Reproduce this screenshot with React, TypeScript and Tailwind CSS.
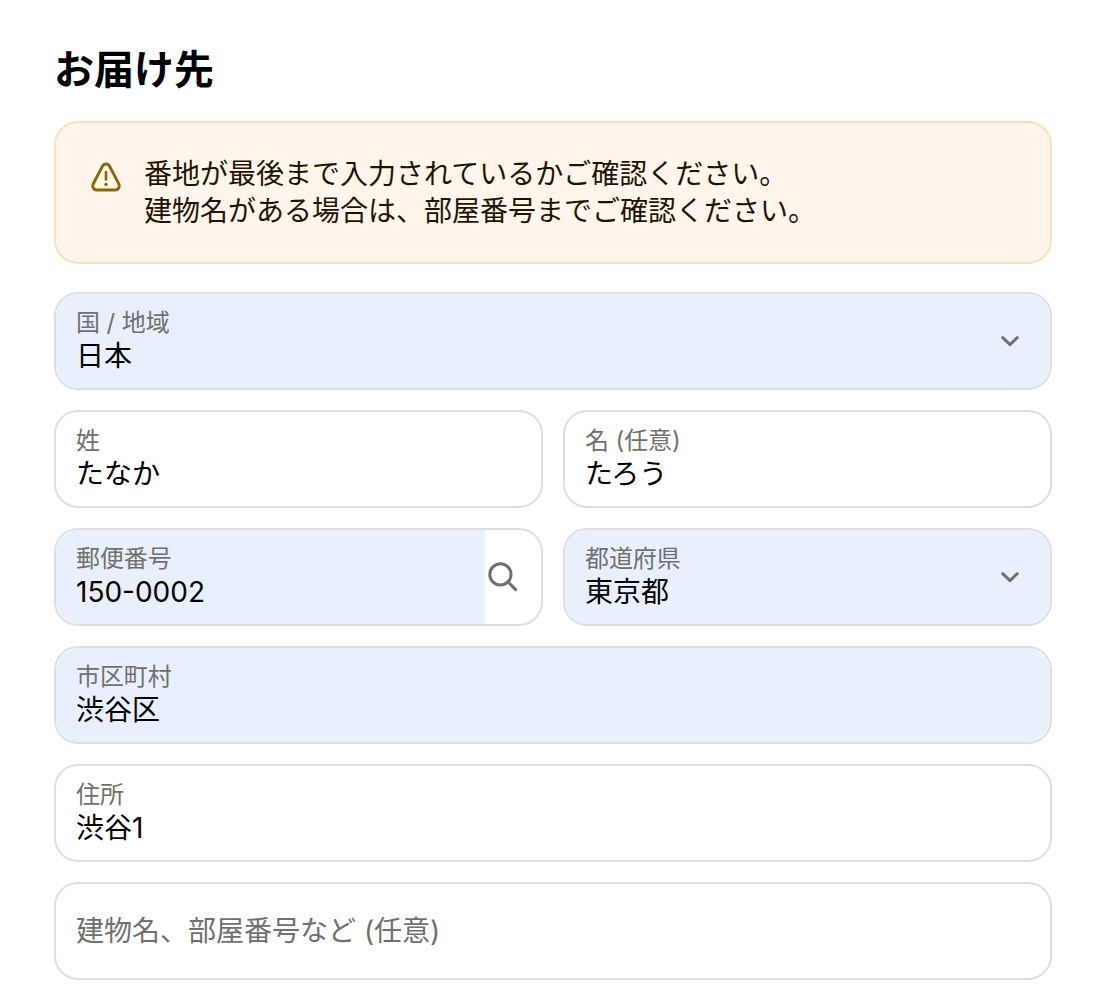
import type { ReactNode } from "react";

const Chevron = () => (
  <svg width="20" height="12" viewBox="0 0 20 12" fill="none" className="mr-[30px] shrink-0">
    <path d="M2.7 2.7L10 9.6L17.3 2.7" stroke="#707070" strokeWidth="3" strokeLinecap="round" strokeLinejoin="round" />
  </svg>
);

type FieldProps = {
  label: string;
  value: string;
  fill?: string;
  icon?: ReactNode;
};

const Field = ({ label, value, fill = "", icon }: FieldProps) => (
  <div className="h-[98px] rounded-[24px] border-2 border-[#dedede] bg-white">
    <div className={`flex h-full items-center overflow-hidden ${fill}`}>
      <div className="h-full flex-1 pl-5 pt-3">
        <div className="text-[24px] leading-[33px] tracking-[-0.1px] text-[#707070]">{label}</div>
        <div className="text-[28px] leading-[34px] text-black">{value}</div>
      </div>
      {icon}
    </div>
  </div>
);

const App = () => {
  return (
    <main className="min-h-[996px] bg-white px-[54px] pt-[42px] font-['Inter','Noto_Sans_CJK_JP',sans-serif]">
      <h1 className="text-[40px] font-bold leading-[56px] text-black">お届け先</h1>

      {/* Address check notice */}
      <div className="mt-[23px] flex h-[143px] rounded-[24px] border-2 border-[#fddfb5] bg-[#fff5ea] pl-[34px] pt-[33px]">
        <svg width="32" height="32" viewBox="0 0 32 32" fill="none" className="mt-[5px] shrink-0">
          <path d="M12.5 5.1c1.5-2.9 5.5-2.9 7 0l9.2 17.6c1.6 3-.2 6.3-3.5 6.3H6.8c-3.3 0-5.1-3.3-3.5-6.3L12.5 5.1Z" stroke="#8f6400" strokeWidth="2.9" strokeLinejoin="round" />
          <path d="M16 11v7.4" stroke="#8f6400" strokeWidth="2.6" strokeLinecap="round" />
          <circle cx="16" cy="23.4" r="1.7" fill="#8f6400" />
        </svg>
        <p className="ml-[22px] text-[28px] leading-[37px] text-[#1f1300]">
          番地が最後まで入力されているかご確認ください。
          <br />
          建物名がある場合は、部屋番号までご確認ください。
        </p>
      </div>

      {/* Address form */}
      <div className="mt-7 flex flex-col gap-5">
        <Field label="国 / 地域" value="日本" fill="rounded-[22px] bg-[#e8f0fe]" icon={<Chevron />} />
        <div className="grid grid-cols-2 gap-5">
          <Field label="姓" value="たなか" />
          <Field label="名 (任意)" value="たろう" />
        </div>
        <div className="grid grid-cols-2 gap-5">
          <Field
            label="郵便番号"
            value="150-0002"
            fill="rounded-[24px] bg-[#e8f0fe]"
            icon={
              <div className="flex h-full w-[56px] items-center bg-white pl-[2px]">
                <svg width="32" height="32" viewBox="0 0 32 32" fill="none">
                  <circle cx="13.4" cy="13.4" r="10.6" stroke="#707070" strokeWidth="3" />
                  <path d="M21 21 28.6 28.6" stroke="#707070" strokeWidth="3" strokeLinecap="round" />
                </svg>
              </div>
            }
          />
          <Field label="都道府県" value="東京都" fill="rounded-[22px] bg-[#e8f0fe]" icon={<Chevron />} />
        </div>
        <Field label="市区町村" value="渋谷区" fill="rounded-[24px] bg-[#e8f0fe]" />
        <Field label="住所" value="渋谷1" />
        <div className="flex h-[98px] items-center rounded-[24px] border-2 border-[#dedede] pl-5 text-[28px] text-[#707070]">
          建物名、部屋番号など (任意)
        </div>
      </div>
    </main>
  );
};

export default App;
